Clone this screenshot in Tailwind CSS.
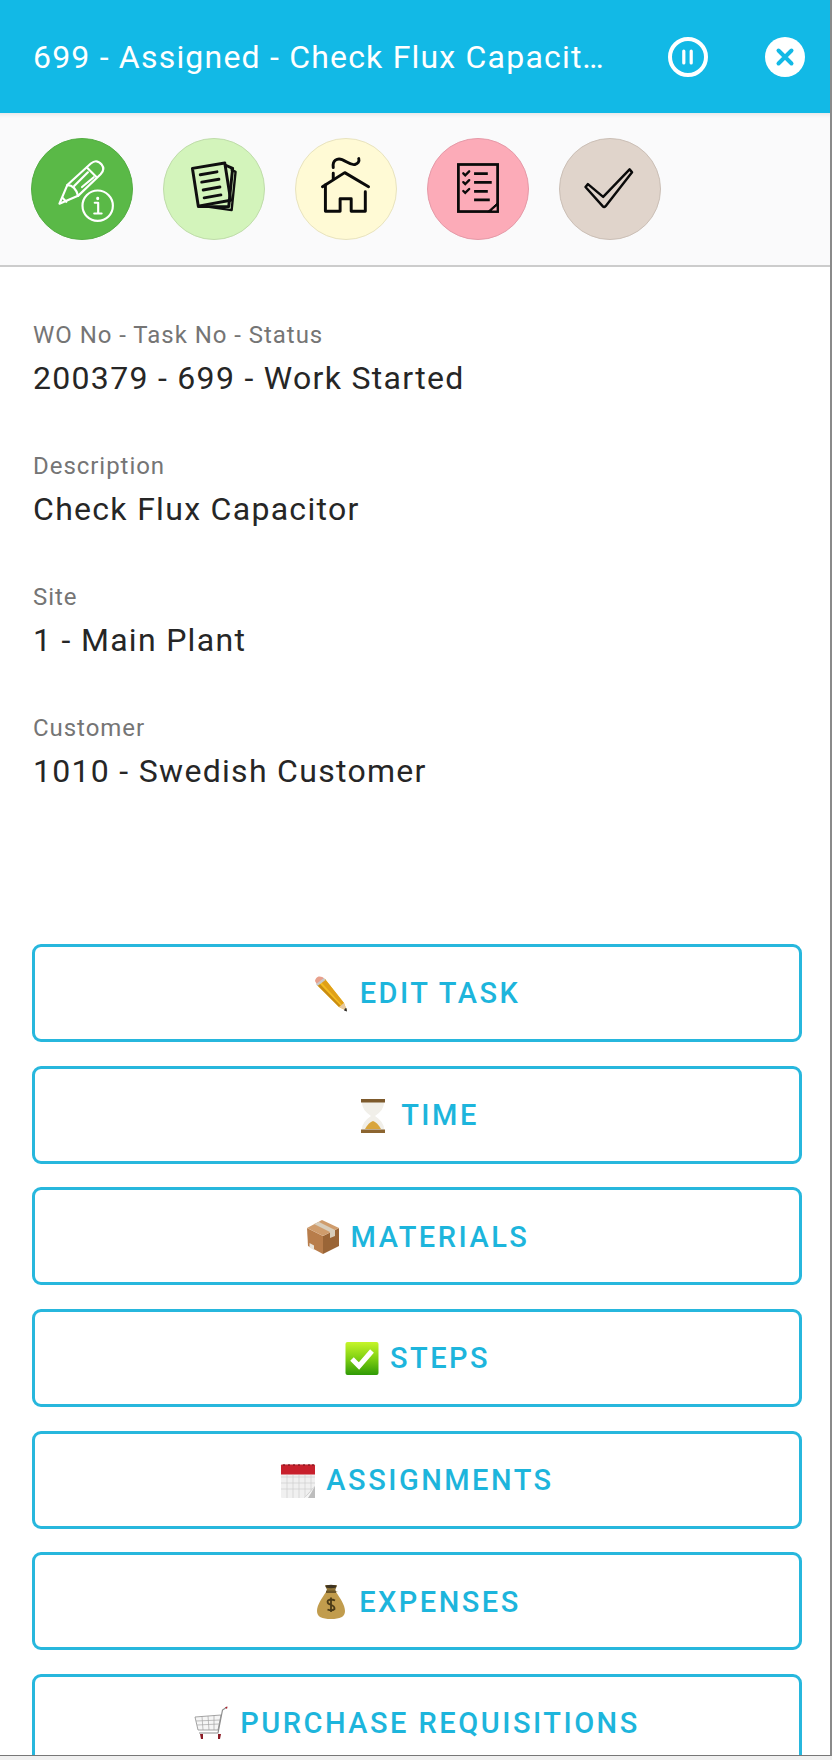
<!DOCTYPE html>
<html lang="en">
<head>
    <meta charset="UTF-8">
    <meta name="viewport" content="width=device-width, initial-scale=1.0">
    <title>Task 699</title>
    <script src="https://cdn.jsdelivr.net/npm/@tailwindcss/browser@4"></script>
</head>
<body class="bg-[#f0f0f0] h-[1760px] overflow-hidden font-['Roboto',sans-serif]">
<div class="h-[1756px] overflow-hidden bg-white border-b border-b-[#777] border-r-2 border-r-[#8a8a8a]">

    <!-- Header -->
    <header class="h-[113px] bg-[#12b9e6] flex items-center pl-[33px] text-white">
        <h1 class="w-[580px] truncate text-[32px] font-normal tracking-[1.2px] leading-[42px] pt-[1px]">699 - Assigned - Check Flux Capacitor</h1>
        <div class="ml-[55px] flex items-center gap-[57px]">
            <svg class="w-[40px] h-[40px]" viewBox="0 0 40 40" fill="none" stroke="white">
                <circle cx="20" cy="20" r="18" stroke-width="4"/>
                <path d="M15.8 14v12M23.2 14v12" stroke-width="3.2" stroke-linecap="round"/>
            </svg>
            <svg class="w-[40px] h-[40px]" viewBox="0 0 40 40" fill="none">
                <circle cx="20" cy="20" r="20" fill="white"/>
                <path d="M13.5 13.5l13 13M26.5 13.5l-13 13" stroke="#12b9e6" stroke-width="4" stroke-linecap="round"/>
            </svg>
        </div>
    </header>

    <!-- Section icons -->
    <nav class="h-[154px] bg-[#fafafb] border-b-2 border-[#cccccc] flex items-center gap-[30px] pl-[31px] shadow-[inset_0_5px_5px_-4px_rgba(0,0,0,0.10)]">
        <div class="w-[102px] h-[102px] rounded-full bg-[#5ab947] border border-[#54ad43]">
            <svg viewBox="0 0 102 102" class="w-full h-full" fill="none" stroke="white" stroke-width="2.2" stroke-linejoin="round" stroke-linecap="round">
                <path d="M28 66L36 47L60 25Q66 20 71 26Q75 31 70 36L47 58Z"/>
                <path d="M36 47Q44 47 47 58M31 60L35 64M56 29L66 39"/>
                <path d="M43 48L57 34M51 49L63 39"/>
                <circle cx="67" cy="68" r="15.5"/>
                <path d="M64 65H67.5V76M63.5 76H71"/>
                <path d="M67 60.5V61" stroke-width="3"/>
            </svg>
        </div>
        <div class="w-[102px] h-[102px] rounded-full bg-[#d3f4bb] border border-[#bfdcaa]">
            <svg viewBox="0 0 102 102" class="w-full h-full" fill="none" stroke="#0f0f0f" stroke-width="3" stroke-linejoin="round" stroke-linecap="round">
                <path d="M29 30L62 24.5L68 62.5L35 68.5Z" fill="#d3f4bb"/>
                <path d="M63.5 27L70 30L66 69L35.5 69" />
                <path d="M69 31.5L73 33.5L69 72.5L44 69" stroke-width="2.4"/>
                <path d="M37 36.5L54 33.5M38.5 44L56 41M40 52L57 49M41 60L58 57"/>
            </svg>
        </div>
        <div class="w-[102px] h-[102px] rounded-full bg-[#fffad5] border border-[#e8e3bf]">
            <svg viewBox="0 0 102 102" class="w-full h-full" fill="none" stroke="#0a0a0a" stroke-width="3" stroke-linejoin="round" stroke-linecap="round">
                <path d="M27 48.7L49.7 34.3L74 48.7"/>
                <path d="M30 47V73.7H45V61H56.3V73.7H70.7V53.7"/>
                <path d="M38 40.5V35M38 29C37 22 42 19 47 21C52 23 56 27 60 26C63 25 65 23 64 20"/>
            </svg>
        </div>
        <div class="w-[102px] h-[102px] rounded-full bg-[#fcabb8] border border-[#e59aa8]">
            <svg viewBox="0 0 102 102" class="w-full h-full" fill="none" stroke="#0a0a0a" stroke-width="2.8" stroke-linecap="round">
                <rect x="31" y="26" width="40" height="48"/>
                <path d="M47 35.3H61M47 44.3H65M47 53.3H61M47 62H63" stroke-linecap="butt"/>
                <path d="M36 35L38 37L42 33M36 44L38 46L42 42M36 53L38 55L42 51" stroke-width="2.4"/>
                <path d="M61 74L71 65V74Z" fill="#0a0a0a" stroke-width="1"/>
                <path d="M65 73L70 68.5V73Z" fill="#fcabb8" stroke="none"/>
            </svg>
        </div>
        <div class="w-[102px] h-[102px] rounded-full bg-[#e0d4cb] border border-[#cbbfb6]">
            <svg viewBox="0 0 102 102" class="w-full h-full" fill="none" stroke="#0a0a0a" stroke-width="2.5" stroke-linejoin="round">
                <path d="M26 49L28.5 46L44 59L71 31L73.5 34L46.5 68.5Q45 70 43.5 68.5Z"/>
            </svg>
        </div>
    </nav>

    <!-- Task fields -->
    <section class="pt-[55px] pl-[33px]">
        <div class="h-[131px]">
            <p class="text-[24px] leading-[26px] tracking-[0.96px] text-[#757575]">WO No - Task No - Status</p>
            <p class="mt-[10px] text-[32px] leading-[40px] tracking-[1.3px] text-[#262626]">200379 - 699 - Work Started</p>
        </div>
        <div class="h-[131px]">
            <p class="text-[24px] leading-[26px] tracking-[0.96px] text-[#757575]">Description</p>
            <p class="mt-[10px] text-[32px] leading-[40px] tracking-[1.3px] text-[#262626]">Check Flux Capacitor</p>
        </div>
        <div class="h-[131px]">
            <p class="text-[24px] leading-[26px] tracking-[0.96px] text-[#757575]">Site</p>
            <p class="mt-[10px] text-[32px] leading-[40px] tracking-[1.3px] text-[#262626]">1 - Main Plant</p>
        </div>
        <div class="h-[131px]">
            <p class="text-[24px] leading-[26px] tracking-[0.96px] text-[#757575]">Customer</p>
            <p class="mt-[10px] text-[32px] leading-[40px] tracking-[1.3px] text-[#262626]">1010 - Swedish Customer</p>
        </div>
    </section>

    <!-- Action buttons -->
    <div class="mt-[98px] mx-[32px] w-[770px] flex flex-col gap-[23.67px]">
        <button class="h-[98px] shrink-0 flex items-center justify-center gap-[10px] pt-[2px] border-[3px] border-[#27b7dd] rounded-[9px] text-[#1db5dc] text-[29px] font-medium tracking-[2.5px]">
            <svg class="w-[36px] h-[36px]" viewBox="0 0 36 36">
                <path d="M3 9L11 3L30 27L33 35L25 31Z" fill="#f3bc1f"/>
                <path d="M7 6L11 3L30 27L28 29Z" fill="#e0a018"/>
                <path d="M3 9L25 31L27 30L5 7Z" fill="#c98c12"/>
                <path d="M1 5Q1.5 1.5 4.5 0.5Q8 0 10.5 2.5L3 8.5Z" fill="#e8a08c"/>
                <path d="M2 8L10 2L11.5 4L3.5 10Z" fill="#c9c9c9"/>
                <path d="M25 31L30 27L33 35Z" fill="#e6c9a0"/>
                <path d="M31 32.5L32.4 32L33 35.5L30 34.5Z" fill="#2b2b2b"/>
            </svg>
            EDIT TASK
        </button>
        <button class="h-[98px] shrink-0 flex items-center justify-center gap-[10px] pt-[2px] border-[3px] border-[#27b7dd] rounded-[9px] text-[#1db5dc] text-[29px] font-medium tracking-[2.5px]">
            <svg class="w-[36px] h-[36px]" viewBox="0 0 36 36">
                <path d="M7 2H29V5Q29 12 20 18Q29 24 29 31V34H7V31Q7 24 16 18Q7 12 7 5Z" fill="#f1efe9"/>
                <path d="M10 31Q14 24 18 23Q22 24 26 31Z" fill="#d9a53c"/>
                <rect x="6" y="1" width="24" height="3.5" fill="#7d5a2c"/>
                <rect x="6" y="31.5" width="24" height="3.5" fill="#8c6530"/>
            </svg>
            TIME
        </button>
        <button class="h-[98px] shrink-0 flex items-center justify-center gap-[10px] pt-[2px] border-[3px] border-[#27b7dd] rounded-[9px] text-[#1db5dc] text-[29px] font-medium tracking-[2.5px]">
            <svg class="w-[36px] h-[36px]" viewBox="0 0 36 36">
                <path d="M2 9L18 17V35L3 27Z" fill="#b87d4b"/>
                <path d="M18 17L34 9V27L18 35Z" fill="#9a6537"/>
                <path d="M2 9L17 1L34 9L18 17Z" fill="#cf9c6c"/>
                <path d="M9 5L25 13V19L30 17V11L14 3Z" fill="#d8cdbb"/>
                <path d="M4.5 24L9 26.5V31L4.5 28.5Z" fill="#e8e4dc"/>
            </svg>
            MATERIALS
        </button>
        <button class="h-[98px] shrink-0 flex items-center justify-center gap-[10px] pt-[2px] border-[3px] border-[#27b7dd] rounded-[9px] text-[#1db5dc] text-[29px] font-medium tracking-[2.5px]">
            <svg class="w-[36px] h-[36px]" viewBox="0 0 36 36">
                <defs>
                    <linearGradient id="stepsGreen" x1="0" y1="0" x2="0" y2="1">
                        <stop offset="0" stop-color="#c6f52a"/>
                        <stop offset="0.5" stop-color="#7fd012"/>
                        <stop offset="1" stop-color="#2f9a06"/>
                    </linearGradient>
                </defs>
                <rect x="1.5" y="1" width="33" height="33" rx="2" fill="url(#stepsGreen)"/>
                <path d="M8 18L15 25L28 10" fill="none" stroke="white" stroke-width="5"/>
            </svg>
            STEPS
        </button>
        <button class="h-[98px] shrink-0 flex items-center justify-center gap-[10px] pt-[2px] border-[3px] border-[#27b7dd] rounded-[9px] text-[#1db5dc] text-[29px] font-medium tracking-[2.5px]">
            <svg class="w-[36px] h-[36px]" viewBox="0 0 36 36">
                <rect x="1" y="1" width="34" height="34" rx="1" fill="#f0f0f0"/>
                <path d="M1 14H35M1 20H35M1 26H35M7 12V35M13 12V35M19 12V35M25 12V35M31 12V35" stroke="#cfcfcf" stroke-width="0.7"/>
                <path d="M1 2.5Q1 1.5 2 1.5H34Q35 1.5 35 2.5V11.5H1Z" fill="#c8202c"/>
                <path d="M4 1V3M9 1V3M14 1V3M19 1V3M24 1V3M29 1V3M33 1V3" stroke="#7a1a20" stroke-width="1.2"/>
                <path d="M35 23V35H24Z" fill="#bdbdbd"/>
                <path d="M24 35Q29 31 35 23Q30 32 28 35Z" fill="#f5f5f5"/>
            </svg>
            ASSIGNMENTS
        </button>
        <button class="h-[98px] shrink-0 flex items-center justify-center gap-[10px] pt-[2px] border-[3px] border-[#27b7dd] rounded-[9px] text-[#1db5dc] text-[29px] font-medium tracking-[2.5px]">
            <svg class="w-[36px] h-[36px]" viewBox="0 0 36 36">
                <path d="M13 8C9 14 4 21 4 27C4 33 9 35 18 35C27 35 32 33 32 27C32 21 27 14 23 8Z" fill="#c19c4d"/>
                <path d="M12 1H24L22 7L25 8L14 9L14 6Z" fill="#8e7236"/>
                <ellipse cx="18" cy="2.5" rx="5.5" ry="1.7" fill="#3f3421"/>
                <rect x="13" y="6.5" width="10" height="2.5" fill="#6a5427"/>
                <path d="M22 16.5Q18 14.5 15 16.5Q13.5 19 17 20.5Q22 22 21.5 25Q19 27.5 14.5 25.5M18 13.5V28" fill="none" stroke="#4a3a17" stroke-width="1.8"/>
            </svg>
            EXPENSES
        </button>
        <button class="h-[98px] shrink-0 flex items-center justify-center gap-[10px] pt-[2px] border-[3px] border-[#27b7dd] rounded-[9px] text-[#1db5dc] text-[29px] font-medium tracking-[2.5px]">
            <svg class="w-[36px] h-[36px]" viewBox="0 0 36 36" fill="none">
                <path d="M1 11L27 9L24 24L4 24Z" fill="#f5f5f5" stroke="#8d8d8d" stroke-width="0.8"/>
                <path d="M2 15L26 14M3 19L25 18M8 10.5L9 24M14 10L15 24M20 9.5L20 24" stroke="#a5a5a5" stroke-width="0.7"/>
                <path d="M33 1L28.5 4L24 27L5 27" stroke="#8d8d8d" stroke-width="1.2"/>
                <path d="M31 1.5L33.5 0.5L33 3Z" fill="#b0202c"/>
                <path d="M6 28H9V33H7ZM24 28H27L26 33H24Z" fill="#8c1c26"/>
            </svg>
            PURCHASE REQUISITIONS
        </button>
    </div>
</div>
</body>
</html>
